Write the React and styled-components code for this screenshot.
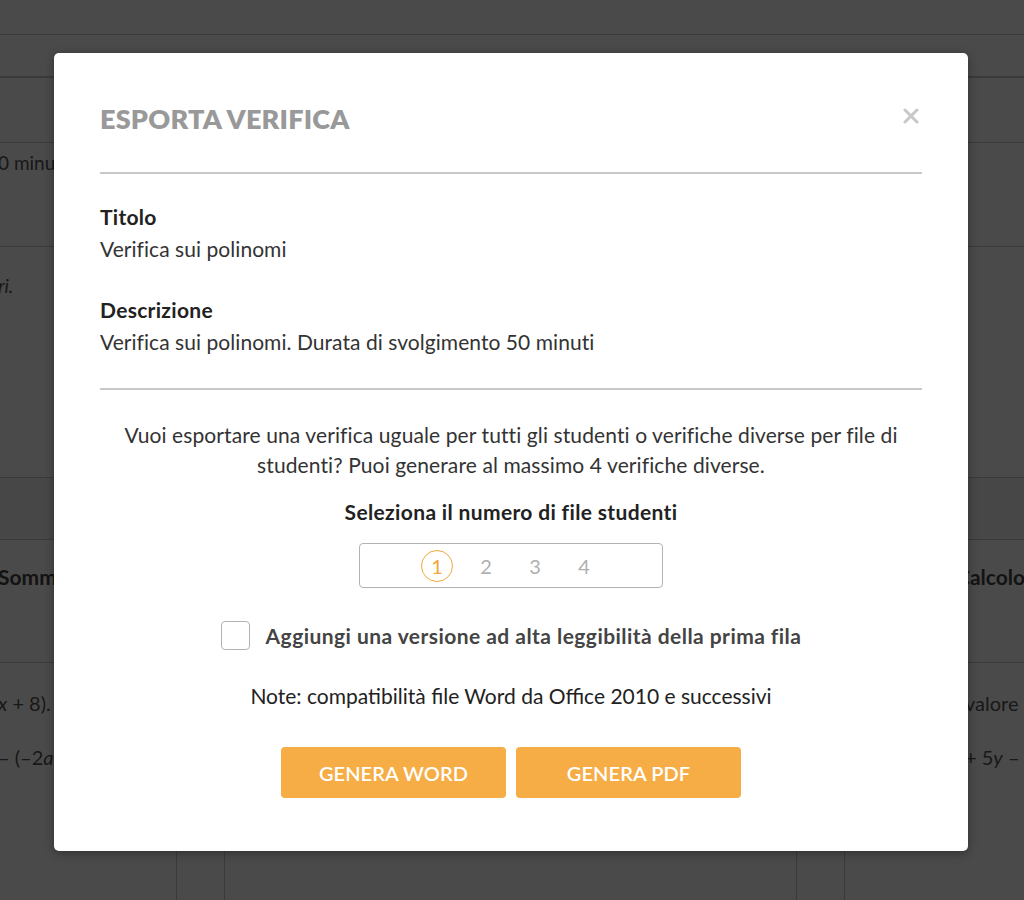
import styled, { createGlobalStyle } from "styled-components"

const GlobalStyle = createGlobalStyle`
html, body {
  margin: 0;
  padding: 0;
}
body {
  font-family: Lato, "Liberation Sans", sans-serif;
  background: #fff;
  overflow: hidden;
}
`

/* page under the dialog */
const Page = styled.div`
position: relative;
width: 1024px;
height: 900px;
overflow: hidden;
background: #fff;
color: #555;
font-size: 19px;
`

const Band = styled.div`
height: ${p => p.$h}px;
box-sizing: border-box;
border-bottom: ${p => p.$line || 1}px solid #c6c6c6;
background: ${p => p.$bg || "#fff"};
padding-top: ${p => p.$top || 0}px;
line-height: 24px;
white-space: nowrap;
`

const Cut = styled.span`
display: block;
margin-left: -2px;
font-style: ${p => (p.$italic ? "italic" : "normal")};
`

const Columns = styled.div`
display: flex;
gap: 47px;
margin-left: -2px;
height: 360px;
`

const Column = styled.div`
flex: 0 0 ${p => p.$w}px;
box-sizing: border-box;
border-left: ${p => (p.$left ? "1px solid #c6c6c6" : "none")};
border-right: ${p => (p.$right ? "1px solid #c6c6c6" : "none")};
white-space: nowrap;
line-height: 24px;
font-size: 20px;
`

const ColHead = styled.div`
height: 123px;
box-sizing: border-box;
border-bottom: 1px solid #c6c6c6;
padding: 25px 0 0 ${p => p.$pad || 0}px;
font-weight: 700;
font-size: 21px;
color: #444;
`

const ColBody = styled.div`
padding: 28px 0 0 ${p => p.$pad || 0}px;
display: flex;
flex-direction: column;
gap: 30px;
`

/* dialog */
const Overlay = styled.div`
position: absolute;
inset: 0;
background: rgba(0, 0, 0, 0.71);
display: flex;
justify-content: center;
align-items: flex-start;
padding: 53px 2px 0 0;
`

const Modal = styled.div`
width: 914px;
height: 798px;
box-sizing: border-box;
background: #fff;
border-radius: 5px;
box-shadow: 0 2px 10px rgba(0, 0, 0, 0.35);
padding: 46px 46px 0;
display: flex;
flex-direction: column;
color: #333;
`

const Header = styled.div`
display: flex;
justify-content: space-between;
align-items: center;
height: 38px;
`

const Title = styled.h2`
margin: 0;
font-size: 27px;
font-weight: 800;
color: #999;
letter-spacing: 0.2px;
`

const Close = styled.button`
border: none;
background: none;
padding: 0;
width: 20px;
height: 20px;
display: flex;
align-items: center;
justify-content: center;
margin-right: 1px;
margin-top: -4px;
cursor: pointer;
`

const Divider = styled.hr`
margin: ${p => p.$top}px 0 0;
border: none;
height: 2px;
background: #c9c9c9;
`

const Field = styled.div`
margin-top: ${p => p.$top}px;
line-height: 32px;
font-size: 21px;
`

const Label = styled.div`
font-weight: 700;
color: #222;
letter-spacing: 0.3px;
`

const Value = styled.div`
color: #333;
letter-spacing: 0.05px;
`

const Intro = styled.p`
margin: 30px 0 0;
text-align: center;
font-size: 21px;
line-height: 30px;
letter-spacing: 0.1px;
color: #333;
`

const SubTitle = styled.div`
margin-top: 17px;
text-align: center;
font-weight: 700;
font-size: 21px;
line-height: 30px;
letter-spacing: 0.35px;
color: #222;
`

const Picker = styled.div`
align-self: center;
margin-top: 16px;
width: 304px;
height: 45px;
box-sizing: border-box;
border: 1.5px solid #b3b3b3;
border-radius: 4px;
display: flex;
align-items: center;
justify-content: center;
gap: 17px;
padding-right: 1px;
`

const Num = styled.span`
width: 32px;
height: 32px;
box-sizing: border-box;
border-radius: 50%;
border: 1.5px solid ${p => (p.$on ? "#f2a93b" : "transparent")};
color: ${p => (p.$on ? "#f2a93b" : "#b0b0b0")};
display: flex;
align-items: center;
justify-content: center;
font-size: 20px;
`

const CheckRow = styled.label`
align-self: center;
margin-top: 33px;
display: flex;
align-items: center;
gap: 16px;
cursor: pointer;
`

const Box = styled.span`
width: 29px;
height: 29px;
box-sizing: border-box;
border: 1.5px solid #b3b3b3;
border-radius: 4px;
`

const CheckText = styled.span`
font-weight: 700;
font-size: 21px;
letter-spacing: 0.45px;
color: #444;
`

const Note = styled.div`
margin-top: 31px;
text-align: center;
font-size: 21px;
line-height: 30px;
color: #222;
`

const Actions = styled.div`
margin-top: 36px;
display: flex;
justify-content: center;
gap: 10px;
`

const Button = styled.button`
width: 225px;
height: 51px;
border: none;
border-radius: 4px;
background: #f6ad45;
color: #fff;
font-family: inherit;
font-size: 20px;
font-weight: 600;
letter-spacing: 0.1px;
text-transform: uppercase;
cursor: pointer;
`

export default function App() {
    return (
        <>
            <GlobalStyle />
            <Page>
                <Band $h={35} />
                <Band $h={43} $line={2} />
                <Band $h={65} />
                <Band $h={104} $top={8}><Cut>0 minuti</Cut></Band>
                <Band $h={231} $top={27}><Cut $italic>ri.</Cut></Band>
                <Band $h={62} $bg="#f3f3f3" />
                <Columns>
                    <Column $w={179} $right>
                        <ColHead>Sommare</ColHead>
                        <ColBody>
                            <span><i>x</i> + 8).</span>
                            <span>– (–2<i>a</i> + 3)</span>
                        </ColBody>
                    </Column>
                    <Column $w={573} $left $right>
                        <ColHead $pad={24}>Esercizio</ColHead>
                    </Column>
                    <Column $w={300} $left>
                        <ColHead $pad={111}>Calcolo</ColHead>
                        <ColBody $pad={120}>
                            <span>valore</span>
                            <span>+ 5<i>y</i> – 2</span>
                        </ColBody>
                    </Column>
                </Columns>

                <Overlay>
                    <Modal role="dialog">
                        <Header>
                            <Title>ESPORTA VERIFICA</Title>
                            <Close aria-label="Chiudi">
                                <svg width="16" height="16" viewBox="0 0 16 16">
                                    <path d="M2 2 L14 14 M14 2 L2 14" stroke="#c8c8c8" strokeWidth="3" strokeLinecap="round" />
                                </svg>
                            </Close>
                        </Header>
                        <Divider $top={35} />

                        <Field $top={27}>
                            <Label>Titolo</Label>
                            <Value>Verifica sui polinomi</Value>
                        </Field>
                        <Field $top={29}>
                            <Label>Descrizione</Label>
                            <Value>Verifica sui polinomi. Durata di svolgimento 50 minuti</Value>
                        </Field>
                        <Divider $top={30} />

                        <Intro>
                            Vuoi esportare una verifica uguale per tutti gli studenti o verifiche diverse per file di
                            <br />
                            studenti? Puoi generare al massimo 4 verifiche diverse.
                        </Intro>
                        <SubTitle>Seleziona il numero di file studenti</SubTitle>
                        <Picker>
                            {[1, 2, 3, 4].map(n => (
                                <Num key={n} $on={n === 1}>{n}</Num>
                            ))}
                        </Picker>

                        <CheckRow>
                            <Box />
                            <CheckText>Aggiungi una versione ad alta leggibilità della prima fila</CheckText>
                        </CheckRow>

                        <Note>Note: compatibilità file Word da Office 2010 e successivi</Note>

                        <Actions>
                            <Button>Genera Word</Button>
                            <Button>Genera PDF</Button>
                        </Actions>
                    </Modal>
                </Overlay>
            </Page>
        </>
    )
}
